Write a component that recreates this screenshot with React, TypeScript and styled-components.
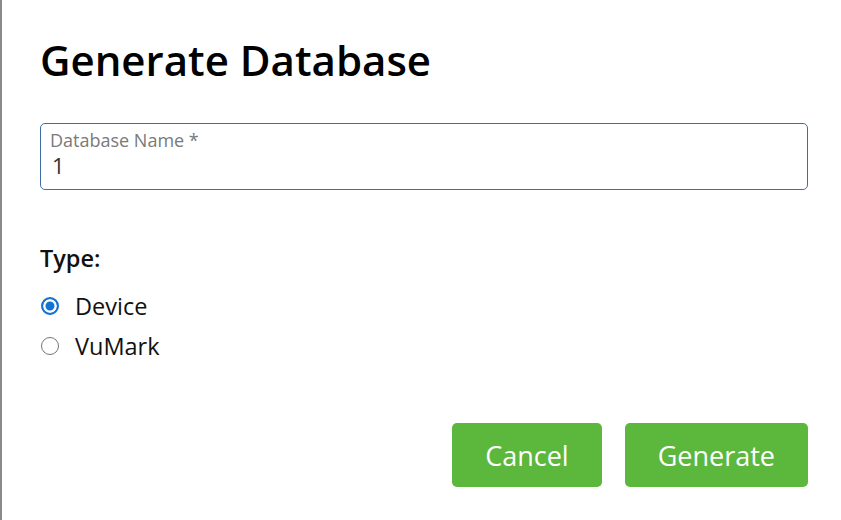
import React, { useState } from 'react'
import styled, { createGlobalStyle } from 'styled-components'

const GlobalStyle = createGlobalStyle`
  html, body {
    margin: 0;
    padding: 0;
    background: #fff;
  }
  body {
    font-family: 'Open Sans', 'Noto Sans', sans-serif;
  }
`

const Dialog = styled.div`
  box-sizing: border-box;
  height: 520px;
  border-left: 2px solid #8a8a8a;
  padding: 30px 33px 0 38px;
  display: flex;
  flex-direction: column;
`
const Title = styled.h1`
  margin: 0;
  font-size: 42px;
  font-weight: 600;
  line-height: 60px;
  color: #000;
`
const Field = styled.label`
  margin-top: 33px;
  box-sizing: border-box;
  height: 67px;
  border: 1px solid #3d6fa6;
  border-radius: 5px;
  padding: 5px 10px 0 9px;
  display: flex;
  flex-direction: column;
`
const FieldLabel = styled.span`
  font-size: 18px;
  line-height: 22px;
  color: #7a7a7a;
`
const FieldInput = styled.input`
  border: none;
  outline: none;
  padding: 0 0 0 2px;
  margin: 0;
  font-family: inherit;
  font-size: 22px;
  line-height: 28px;
  height: 28px;
  color: #333;
  caret-color: #333;
  background: transparent;
`
const TypeHeading = styled.div`
  margin-top: 54px;
  font-size: 23.5px;
  font-weight: 600;
  line-height: 28px;
  color: #111;
`
const RadioList = styled.div`
  margin-top: 19px;
  display: flex;
  flex-direction: column;
  gap: 10px;
`
const RadioRow = styled.label`
  display: flex;
  align-items: center;
  gap: 16px;
  font-size: 23.5px;
  line-height: 30px;
  color: #111;
  cursor: pointer;
`
const RadioDot = styled.span<{ $checked: boolean }>`
  box-sizing: border-box;
  width: 18px;
  height: 18px;
  border-radius: 50%;
  margin-left: 1px;
  border: ${p => (p.$checked ? '2px solid #1473d2' : '1.5px solid #767676')};
  background: ${p => (p.$checked ? '#1473d2' : '#fff')};
  box-shadow: ${p => (p.$checked ? 'inset 0 0 0 2.5px #fff' : 'none')};
`
const HiddenRadio = styled.input`
  display: none;
`
const Actions = styled.div`
  margin-top: auto;
  margin-bottom: 33px;
  display: flex;
  justify-content: flex-end;
  gap: 23px;
`
const Button = styled.button`
  height: 64px;
  padding: 0 33px;
  border: none;
  border-radius: 5px;
  background: #5cb73d;
  color: #fff;
  font-family: inherit;
  font-size: 27px;
  cursor: pointer;
`

const types = ['Device', 'VuMark']

export default function App() {
  const [name, setName] = useState('1')
  const [type, setType] = useState('Device')
  return (
    <>
      <GlobalStyle />
      <Dialog>
        <Title>Generate Database</Title>
        <Field>
          <FieldLabel>Database Name *</FieldLabel>
          <FieldInput value={name} onChange={e => setName(e.target.value)} autoFocus />
        </Field>
        <TypeHeading>Type:</TypeHeading>
        <RadioList>
          {types.map(t => (
            <RadioRow key={t}>
              <HiddenRadio type="radio" name="type" checked={type === t} onChange={() => setType(t)} />
              <RadioDot $checked={type === t} />
              {t}
            </RadioRow>
          ))}
        </RadioList>
        <Actions>
          <Button>Cancel</Button>
          <Button>Generate</Button>
        </Actions>
      </Dialog>
    </>
  )
}
